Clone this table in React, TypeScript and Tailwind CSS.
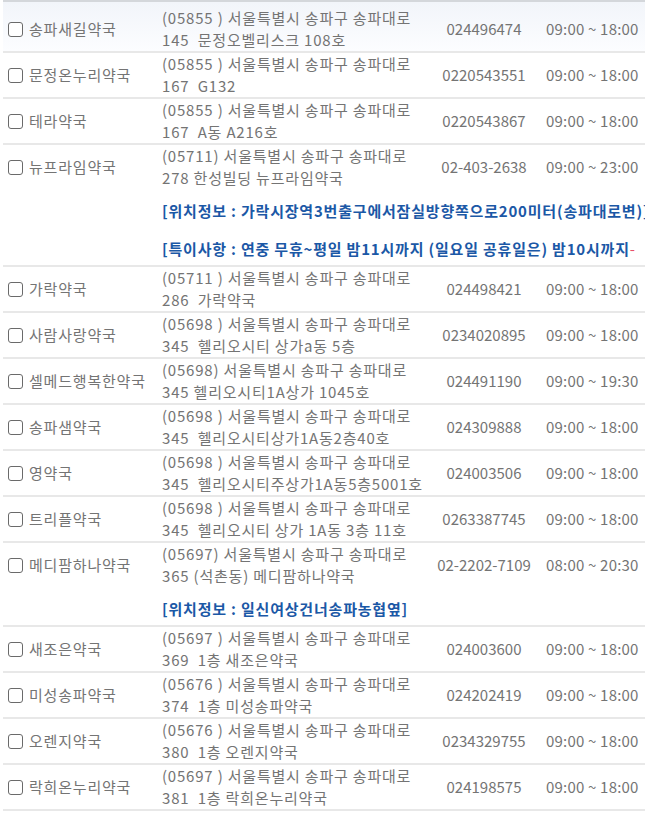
import React from 'react'

type Pharmacy = {
  name: string
  addr1: string
  addr2: string
  tel: string
  hours: string
  notes?: React.ReactNode[]
}

const rows: Pharmacy[] = [
  { name: '송파새길약국', addr1: '(05855 ) 서울특별시 송파구 송파대로', addr2: '145  문정오벨리스크 108호', tel: '024496474', hours: '09:00 ~ 18:00' },
  { name: '문정온누리약국', addr1: '(05855 ) 서울특별시 송파구 송파대로', addr2: '167  G132', tel: '0220543551', hours: '09:00 ~ 18:00' },
  { name: '테라약국', addr1: '(05855 ) 서울특별시 송파구 송파대로', addr2: '167  A동 A216호', tel: '0220543867', hours: '09:00 ~ 18:00' },
  {
    name: '뉴프라임약국',
    addr1: '(05711) 서울특별시 송파구 송파대로',
    addr2: '278 한성빌딩 뉴프라임약국',
    tel: '02-403-2638',
    hours: '09:00 ~ 23:00',
    notes: [
      '[위치정보 : 가락시장역3번출구에서잠실방향쪽으로200미터(송파대로변)]',
      <>
        [특이사항 : 연중 무휴~평일 밤11시까지 (일요일 공휴일은) 밤10시까지{' '}
        <span className="font-normal text-[#e8506a]">-</span>
      </>,
    ],
  },
  { name: '가락약국', addr1: '(05711 ) 서울특별시 송파구 송파대로', addr2: '286  가락약국', tel: '024498421', hours: '09:00 ~ 18:00' },
  { name: '사람사랑약국', addr1: '(05698 ) 서울특별시 송파구 송파대로', addr2: '345  헬리오시티 상가a동 5층', tel: '0234020895', hours: '09:00 ~ 18:00' },
  { name: '셀메드행복한약국', addr1: '(05698) 서울특별시 송파구 송파대로', addr2: '345 헬리오시티1A상가 1045호', tel: '024491190', hours: '09:00 ~ 19:30' },
  { name: '송파샘약국', addr1: '(05698 ) 서울특별시 송파구 송파대로', addr2: '345  헬리오시티상가1A동2층40호', tel: '024309888', hours: '09:00 ~ 18:00' },
  { name: '영약국', addr1: '(05698 ) 서울특별시 송파구 송파대로', addr2: '345  헬리오시티주상가1A동5층5001호', tel: '024003506', hours: '09:00 ~ 18:00' },
  { name: '트리플약국', addr1: '(05698 ) 서울특별시 송파구 송파대로', addr2: '345  헬리오시티 상가 1A동 3층 11호', tel: '0263387745', hours: '09:00 ~ 18:00' },
  {
    name: '메디팜하나약국',
    addr1: '(05697) 서울특별시 송파구 송파대로',
    addr2: '365 (석촌동) 메디팜하나약국',
    tel: '02-2202-7109',
    hours: '08:00 ~ 20:30',
    notes: ['[위치정보 : 일신여상건너송파농협옆]'],
  },
  { name: '새조은약국', addr1: '(05697 ) 서울특별시 송파구 송파대로', addr2: '369  1층 새조은약국', tel: '024003600', hours: '09:00 ~ 18:00' },
  { name: '미성송파약국', addr1: '(05676 ) 서울특별시 송파구 송파대로', addr2: '374  1층 미성송파약국', tel: '024202419', hours: '09:00 ~ 18:00' },
  { name: '오렌지약국', addr1: '(05676 ) 서울특별시 송파구 송파대로', addr2: '380  1층 오렌지약국', tel: '0234329755', hours: '09:00 ~ 18:00' },
  { name: '락희온누리약국', addr1: '(05697 ) 서울특별시 송파구 송파대로', addr2: '381  1층 락희온누리약국', tel: '024198575', hours: '09:00 ~ 18:00' },
]

function Row({ p, first }: { p: Pharmacy; first: boolean }) {
  return (
    <div
      className={
        'border-b-2 border-[#e8e8e8] ' +
        (first ? 'bg-gradient-to-b from-[#f2f5fa] to-[#fcfdff]' : '')
      }
    >
      <div className={'flex items-center ' + (first ? 'h-[49px] pt-[5px]' : 'h-[44px]')}>
        <div className="flex w-[152px] shrink-0 items-center pl-[5px]">
          <span className="h-[15px] w-[15px] shrink-0 rounded-[3px] border-[1.5px] border-[#6a6a6a] bg-white" />
          <span className="ml-[6px] whitespace-nowrap tracking-[0.8px]">{p.name}</span>
        </div>
        <div className="w-[275px] shrink-0 whitespace-pre pl-[7px] tracking-[0.8px]">
          <div>{p.addr1}</div>
          <div>{p.addr2}</div>
        </div>
        <div className="w-[108px] shrink-0 whitespace-nowrap text-center">{p.tel}</div>
        <div className="shrink-0 whitespace-nowrap pl-[8px] tracking-[0.2px]">{p.hours}</div>
      </div>
      {p.notes?.map((n, i) => (
        <div
          key={i}
          className="flex h-[38px] items-center whitespace-nowrap pl-[159px] pt-[6px] font-bold tracking-[0.8px] text-[#1b58a6]"
        >
          {n}
        </div>
      ))}
    </div>
  )
}

export default function App() {
  return (
    <div className="h-[814px] w-full overflow-hidden bg-white font-['Noto_Sans_CJK_KR','Malgun_Gothic',sans-serif] text-[15px] leading-[22px] text-[#747474]">
      <div className="ml-[3px] w-[720px] border-t-2 border-[#d4d7db]">
        {rows.map((p, i) => (
          <Row key={p.name} p={p} first={i === 0} />
        ))}
      </div>
    </div>
  )
}
